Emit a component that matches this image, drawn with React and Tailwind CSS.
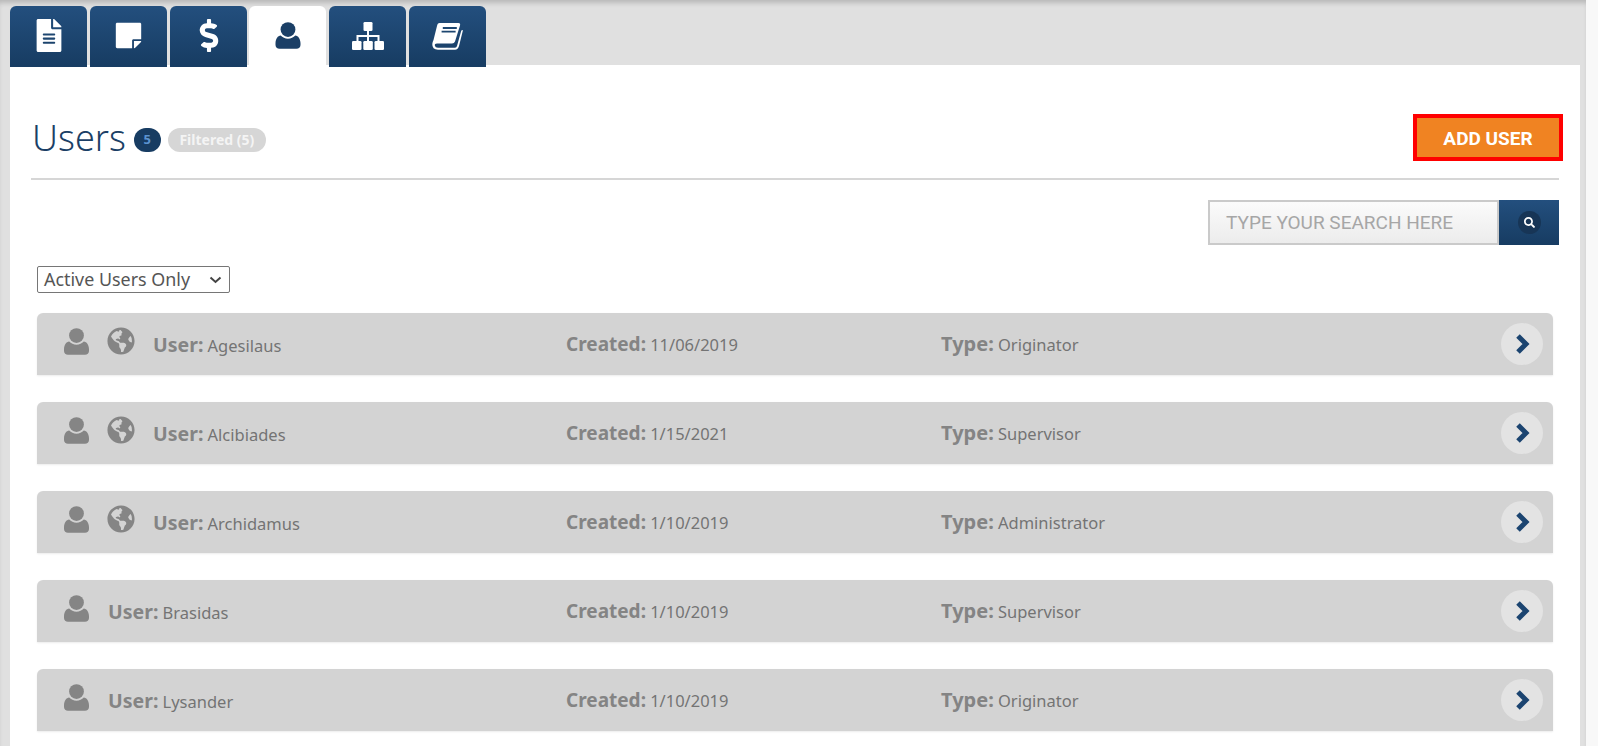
import React from "react";
import { FaFileAlt, FaStickyNote, FaDollarSign, FaGlobeAmericas, FaSearch } from "react-icons/fa";

function UserIcon({ className }) {
  return (
    <svg viewBox="0 0 25 27" fill="currentColor" className={className}>
      <circle cx="12.5" cy="7.6" r="7.4" />
      <path d="M5.2 13.6C7 15.6 9.6 16.7 12.5 16.7S18 15.6 19.8 13.6C22.8 14 24.6 16.6 25 21V23C25 25.4 23.3 26.8 21 26.8H4C1.7 26.8 0 25.4 0 23V21C.4 16.6 2.2 14 5.2 13.6Z" />
    </svg>
  );
}

function SitemapIcon({ className }) {
  return (
    <svg viewBox="0 0 32 28" fill="currentColor" className={className}>
      <rect x="11.5" y="0" width="9" height="9" rx="1.3" />
      <rect x="0" y="19" width="9.5" height="9" rx="1.3" />
      <rect x="11.3" y="19" width="9.5" height="9" rx="1.3" />
      <rect x="22.5" y="19" width="9.5" height="9" rx="1.3" />
      <path d="M15 9H17V13H27.5V19H25.5V15H17V19H15V15H6.5V19H4.5V13H15Z" />
    </svg>
  );
}

function BookIcon({ className }) {
  return (
    <svg viewBox="0 0 31 28" className={className}>
      <path fill="currentColor" d="M7.5 1H26.5Q28.7 1 28 3.5L23 19.5Q22.3 21.5 20 21.5H5Q2.5 21.5 2.8 23.5Q3.2 25.7 6 25.7H23Q24.5 25.7 25 24L29.3 8.5 31 8 27 24Q26 27.7 23 27.7H6Q0 27.7 .3 22 .5 20 1.5 18L5 4Q5.5 1 7.5 1Z" />
      <path d="M10.8 6H24.8M9.6 9.6H23.6" stroke="#1d4670" strokeWidth="1.8" fill="none" />
    </svg>
  );
}

const tabs = [
  [FaFileAlt, "h-[33px] w-[28px]", "pt-[13px]"],
  [FaStickyNote, "h-[29px] w-[29px]", "pt-[15px]"],
  [FaDollarSign, "h-[33px] w-[26px]", "pt-[13px]"],
  [UserIcon, "h-[27px] w-[26px]", "pt-[16px]"],
  [SitemapIcon, "h-[28px] w-[32px]", "pt-[16px]"],
  [BookIcon, "h-[28px] w-[31px]", "pt-[16px]"],
];

const users = [
  ["Agesilaus", "11/06/2019", "Originator", true],
  ["Alcibiades", "1/15/2021", "Supervisor", true],
  ["Archidamus", "1/10/2019", "Administrator", true],
  ["Brasidas", "1/10/2019", "Supervisor", false],
  ["Lysander", "1/10/2019", "Originator", false],
];

function Row({ name, created, type, globe }) {
  return (
    <div className="flex h-[62px] items-center rounded-t-[6px] bg-[#d3d3d3] pr-[10px] text-[#848484] shadow-[0_1px_2px_rgba(0,0,0,0.08)]">
      <div className="flex w-[529px] items-center pl-[27px]">
        <UserIcon className="mb-[5px] h-[27px] w-[25px] text-[#858585]" />
        {globe && <FaGlobeAmericas className="mb-[6px] ml-[18px] h-[28px] w-[28px] text-[#858585]" />}
        <div className={`mt-[2px] whitespace-nowrap ${globe ? "ml-[18px]" : "ml-[19px]"}`}>
          <span className="text-[19.5px] font-bold">User:</span>{" "}
          <span className="text-[16.5px] text-[#747474]">{name}</span>
        </div>
      </div>
      <div className="w-[375px] whitespace-nowrap">
        <span className="text-[19px] font-bold">Created:</span>{" "}
        <span className="text-[16.5px] text-[#747474]">{created}</span>
      </div>
      <div className="flex-1 whitespace-nowrap">
        <span className="text-[20px] font-bold">Type:</span>{" "}
        <span className="text-[16.5px] text-[#747474]">{type}</span>
      </div>
      <div className="flex h-[42px] w-[42px] items-center justify-center rounded-full bg-[#e3e3e3]">
        <svg viewBox="0 0 15 22" className="ml-[1px] h-[22px] w-[15px] text-[#1b4470]">
          <path d="M3 3L11 11L3 19" fill="none" stroke="currentColor" strokeWidth="5" />
        </svg>
      </div>
    </div>
  );
}

export default function App() {
  return (
    <div className="relative h-[746px] w-[1598px] overflow-hidden bg-[#f8f8f8] font-['Noto_Sans',sans-serif]">
      <div className="flex h-full w-[1586px] flex-col bg-[#e0e0e0] pl-[10px] pr-[6px] pt-[6px] shadow-[inset_0_5px_5px_-2px_rgba(0,0,0,0.18)]">
        <div className="relative z-10 flex h-[61px]">
          {tabs.map(([Icon, size, pad], i) => (
            <div
              key={i}
              className={`flex h-[61px] w-[77px] items-start justify-center rounded-t-[6px] ${pad} ${
                i === 3 ? "ml-[2px]" : i === 0 ? "" : "ml-[3px]"
              } ${i === 3 ? "bg-white text-[#1b3f66]" : "bg-gradient-to-b from-[#234f7e] to-[#173c62] text-white"}`}
            >
              <Icon className={size} />
            </div>
          ))}
        </div>
        <div className="-mt-[2px] flex-1 bg-white px-[21px]">
          <div className="flex h-[115px] items-start justify-between border-b-2 border-[#d6d6d6]">
            <div className="ml-[1px] mt-[46px] flex items-center">
              <h1 className="font-['Noto_Sans',sans-serif] text-[36px] font-light leading-[54px] text-[#1b3f66]">Users</h1>
              <span className="ml-[8px] mt-[3px] flex h-[24px] w-[27px] items-center justify-center rounded-full bg-[#173c62] text-[13px] font-bold text-[#5b93cf]">5</span>
              <span className="ml-[7px] mt-[3px] flex h-[24px] w-[98px] items-center justify-center rounded-full bg-[#d6d6d6] text-[14px] font-bold text-[#f4f4f4]">Filtered (5)</span>
            </div>
            <button className="mr-[-4px] mt-[49px] h-[47px] w-[150px] border-[4px] border-[#ff0000] bg-[#f08322] pt-[3px] font-['Roboto',sans-serif] text-[19px] font-bold text-white">ADD USER</button>
          </div>
          <div className="mt-[20px] flex justify-end">
            <div className="flex h-[45px] w-[351px]">
              <div className="flex w-[291px] items-center border-2 border-[#cacaca] bg-gradient-to-b from-[#fbfbfb] to-[#ececec] pl-[16px] pt-[1px] font-['Roboto',sans-serif] text-[19px] text-[#a6a6a6]">TYPE YOUR SEARCH HERE</div>
              <div className="flex flex-1 items-center justify-center bg-gradient-to-b from-[#234f7e] to-[#173c62]">
                <span className="flex h-[23px] w-[23px] items-center justify-center rounded-full bg-[#173556]">
                  <FaSearch className="h-[11px] w-[11px] text-white" />
                </span>
              </div>
            </div>
          </div>
          <div className="ml-[6px] mt-[21px] flex h-[27px] w-[193px] items-center justify-between rounded-[2px] border border-[#767676] bg-white pl-[6px] pr-[7px] text-[17.9px] text-[#555555]">
            <span>Active Users Only</span>
            <svg viewBox="0 0 13 8" className="h-[8px] w-[13px]">
              <path d="M1.5 1.5L6.5 6L11.5 1.5" fill="none" stroke="#444444" strokeWidth="2" />
            </svg>
          </div>
          <div className="mx-[6px] mt-[20px] flex flex-col gap-[27px]">
            {users.map(([n, c, t, g]) => (
              <Row key={n} name={n} created={c} type={t} globe={g} />
            ))}
          </div>
        </div>
      </div>
    </div>
  );
}
